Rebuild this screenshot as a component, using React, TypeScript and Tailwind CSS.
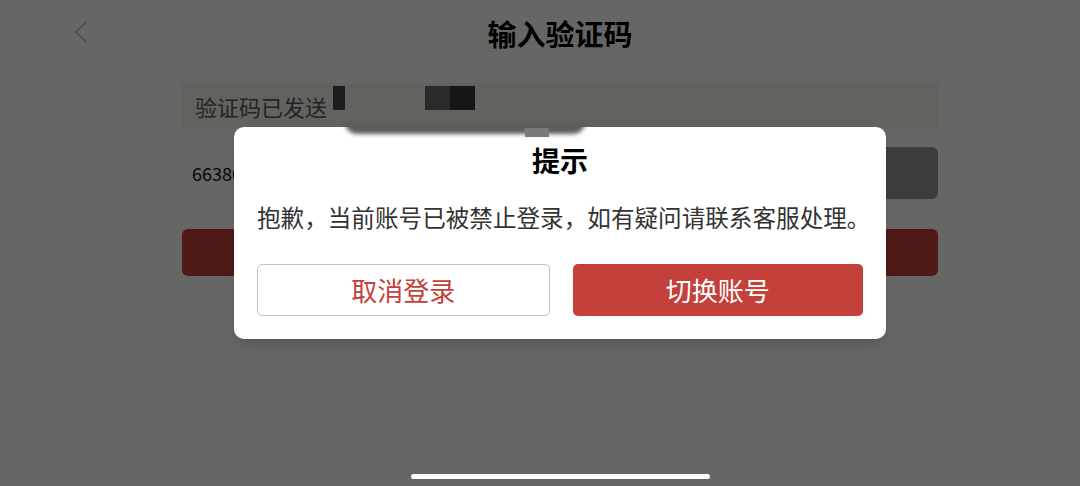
import React from 'react'

const font = { fontFamily: '"Noto Sans CJK SC", "Noto Sans", sans-serif' }

const BackChevron = () => (
  <svg width="16" height="24" viewBox="0 0 16 24" fill="none">
    <path d="M13 2 L3 12 L13 22" stroke="currentColor" strokeWidth="1.6" strokeLinecap="round" strokeLinejoin="round" />
  </svg>
)

const App = () => {
  return (
    <div className="relative w-[1080px] h-[486px] overflow-hidden bg-white" style={font}>
      {/* page underneath */}
      <div className="pl-[40px]">
        <div className="relative h-[66px] flex items-center justify-center">
          <div className="absolute left-[33px] top-[20px] text-[#c6c6c6]">
            <BackChevron />
          </div>
          <h1 className="text-[29px] font-bold text-black leading-none">输入验证码</h1>
        </div>
        <div className="w-[756px] mx-auto mt-[17px] flex flex-col">
          <div className="relative h-[45px] bg-[#faf5ec] flex items-center px-[13px]">
            <span className="text-[22px] text-[#5a5a5a] leading-none">验证码已发送</span>
            <div className="absolute left-[151px] top-[3px] w-[12px] h-[24px] bg-[#4a4a4a]" />
            <div className="absolute left-[243px] top-[3px] w-[25px] h-[24px] bg-[#6a6a6a]" />
            <div className="absolute left-[268px] top-[3px] w-[25px] h-[24px] bg-[#383838]" />
          </div>
          <div className="mt-[19px] h-[52px] flex items-center justify-between">
            <span className="pl-[10px] text-[18px] text-[#111] leading-none">66380</span>
            <div className="w-[220px] h-[52px] rounded-[6px] bg-[#999999]" />
          </div>
          <div className="mt-[30px] h-[47px] rounded-[6px] bg-[#c4403a]" />
        </div>
      </div>

      {/* overlay */}
      <div className="absolute inset-0 bg-black/60 pl-[40px] pt-[127px] flex justify-center items-start">
        <div className="w-[652px] h-[212px] bg-white rounded-[10px] px-[23px] pb-[23px] flex flex-col shadow-lg">
          <div className="h-[66px] flex items-center justify-center">
            <span className="text-[28px] font-bold text-black leading-none">提示</span>
          </div>
          <div className="h-[52px] flex items-start pt-[13px]">
            <p className="text-[23.6px] text-[#333] leading-none whitespace-nowrap">抱歉，当前账号已被禁止登录，如有疑问请联系客服处理。</p>
          </div>
          <div className="mt-auto flex gap-[23px]">
            <button className="flex-1 h-[52px] rounded-[5px] border border-[#cdbdbd] bg-white text-[26px] text-[#c4403a] leading-none" style={font}>
              取消登录
            </button>
            <button className="flex-1 h-[52px] rounded-[5px] bg-[#c4403a] text-[26px] text-white leading-none" style={font}>
              切换账号
            </button>
          </div>
        </div>
      </div>

      {/* redaction smudge over modal edge */}
      <div className="absolute left-[345px] top-[122px] w-[240px] h-[12px] rounded-b-[14px] bg-[#5e5d5a] blur-[2px]" />
      <div className="absolute left-[525px] top-[128px] w-[24px] h-[9px] bg-[#7a7a7a]" />

      {/* home indicator */}
      <div className="absolute left-[411px] top-[474px] w-[299px] h-[5px] rounded-full bg-white" />
    </div>
  )
}

export default App
